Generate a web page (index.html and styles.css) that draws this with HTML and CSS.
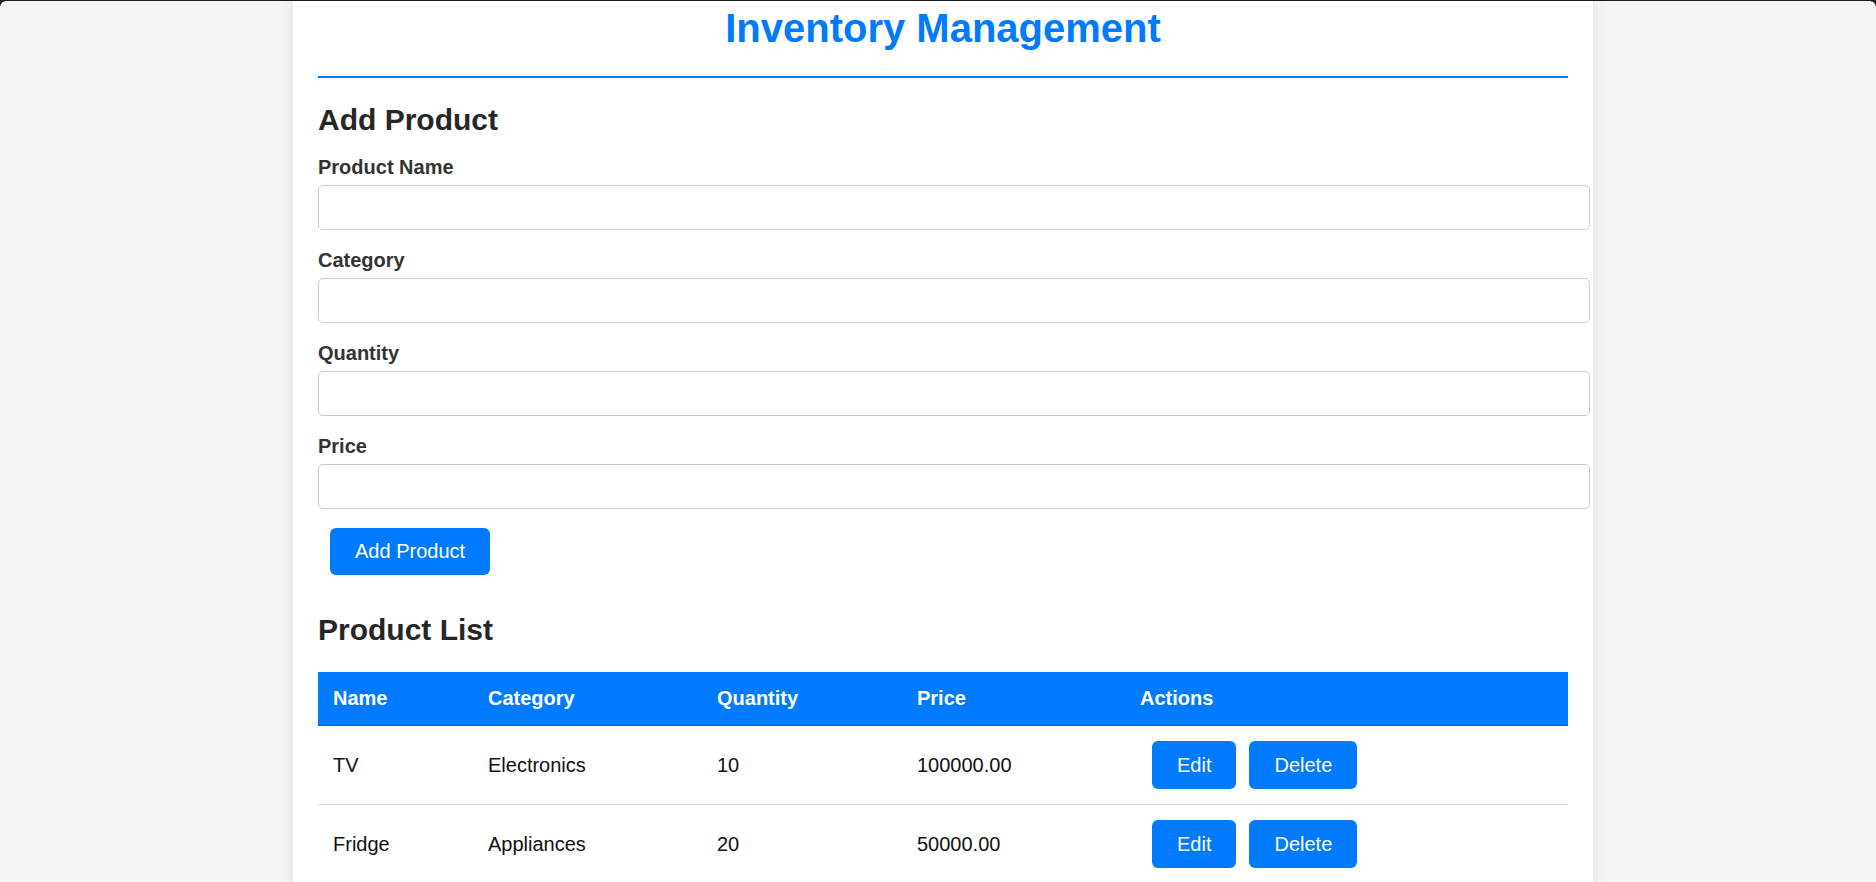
FILE: index.html
```html
<!DOCTYPE html>
<html lang="en">
<head>
<meta charset="utf-8">
<title>Inventory Management</title>
<link rel="stylesheet" href="styles.css">
</head>
<body>
<div class="frame"></div>
<div class="container">
  <h1 class="title">Inventory Management</h1>

  <h2 class="section section-add">Add Product</h2>
  <form class="product-form">
    <div class="form-group">
      <label class="form-label">Product Name</label>
      <input class="form-input" type="text">
    </div>
    <div class="form-group">
      <label class="form-label">Category</label>
      <input class="form-input" type="text">
    </div>
    <div class="form-group">
      <label class="form-label">Quantity</label>
      <input class="form-input" type="text">
    </div>
    <div class="form-group">
      <label class="form-label">Price</label>
      <input class="form-input" type="text">
    </div>
    <button type="button" class="btn btn-add">Add Product</button>
  </form>

  <h2 class="section section-list">Product List</h2>
  <table class="product-table">
    <colgroup>
      <col class="col-name">
      <col class="col-category">
      <col class="col-qty">
      <col class="col-price">
      <col class="col-actions">
    </colgroup>
    <thead>
      <tr>
        <th>Name</th>
        <th>Category</th>
        <th>Quantity</th>
        <th>Price</th>
        <th>Actions</th>
      </tr>
    </thead>
    <tbody>
      <tr>
        <td>TV</td>
        <td>Electronics</td>
        <td>10</td>
        <td>100000.00</td>
        <td><div class="actions"><button type="button" class="btn btn-row">Edit</button><button type="button" class="btn btn-row">Delete</button></div></td>
      </tr>
      <tr>
        <td>Fridge</td>
        <td>Appliances</td>
        <td>20</td>
        <td>50000.00</td>
        <td><div class="actions"><button type="button" class="btn btn-row">Edit</button><button type="button" class="btn btn-row">Delete</button></div></td>
      </tr>
    </tbody>
  </table>
</div>
</body>
</html>
```

FILE: styles.css
```css
* {
  box-sizing: content-box;
}

html {
  background: #f4f4f4;
}

body {
  margin: 0;
  padding: 0 0 0 10px;
  background: #f4f4f4;
  font-family: "Liberation Sans", Arial, sans-serif;
  font-size: 20px;
  color: #333;
}

.frame {
  position: fixed;
  top: 0;
  left: 0;
  right: 0;
  height: 1px;
  background: #1c1c1c;
  z-index: 10;
}

.frame::before,
.frame::after {
  content: "";
  position: absolute;
  top: 1px;
  width: 5px;
  height: 5px;
}

.frame::before {
  left: 0;
  background: radial-gradient(circle at 100% 100%, transparent 4px, #1c1c1c 5px);
}

.frame::after {
  right: 0;
  background: radial-gradient(circle at 0% 100%, transparent 4px, #1c1c1c 5px);
}

.container {
  width: 1250px;
  margin: 0 auto;
  padding: 5px 25px 25px;
  background: #fff;
  box-shadow: 0 0 12px rgba(0, 0, 0, 0.1);
}

.title {
  margin: 0;
  padding-bottom: 25px;
  border-bottom: 2px solid #007bff;
  text-align: center;
  font-size: 40px;
  line-height: 46px;
  font-weight: bold;
  color: #007bff;
}

.section {
  margin: 0;
  font-size: 30px;
  line-height: 34px;
  font-weight: bold;
  color: #262626;
}

.section-add {
  margin-top: 25px;
  margin-bottom: 19px;
}

.section-list {
  margin-top: 38px;
  margin-bottom: 25px;
}

.product-form {
  margin: 0;
}

.form-group {
  margin-bottom: 19px;
}

.form-label {
  display: block;
  margin-bottom: 6px;
  font-size: 20px;
  line-height: 23px;
  font-weight: bold;
  color: #333;
}

.form-input {
  display: block;
  width: 100%;
  margin: 0;
  padding: 10px;
  border: 1px solid #ccc;
  border-radius: 5px;
  font-family: inherit;
  font-size: 20px;
  line-height: 23px;
  height: 23px;
  background: #fff;
  outline: none;
}

.btn {
  display: inline-block;
  margin: 0;
  padding: 12px 25px;
  border: none;
  border-radius: 6px;
  background: #007bff;
  color: #fff;
  font-family: inherit;
  font-size: 20px;
  line-height: 23px;
  cursor: pointer;
}

.btn-add {
  margin-left: 12px;
}

.btn-row {
  padding-top: 12.5px;
  padding-bottom: 12.5px;
}

.product-table {
  width: 1250px;
  border-collapse: collapse;
  table-layout: fixed;
}

.col-name { width: 155px; }
.col-category { width: 229px; }
.col-qty { width: 200px; }
.col-price { width: 223px; }
.col-actions { width: 443px; }

.product-table th {
  padding: 15px;
  background: #007bff;
  color: #fff;
  font-size: 20px;
  line-height: 23px;
  font-weight: bold;
  text-align: left;
  border-bottom: 1px solid #0063d1;
}

.product-table td {
  padding: 15px;
  font-size: 20px;
  line-height: 23px;
  color: #111;
  text-align: left;
  vertical-align: middle;
  border-bottom: 1px solid #ddd;
}

.actions {
  display: flex;
  gap: 13px;
  padding-left: 12px;
}
```
